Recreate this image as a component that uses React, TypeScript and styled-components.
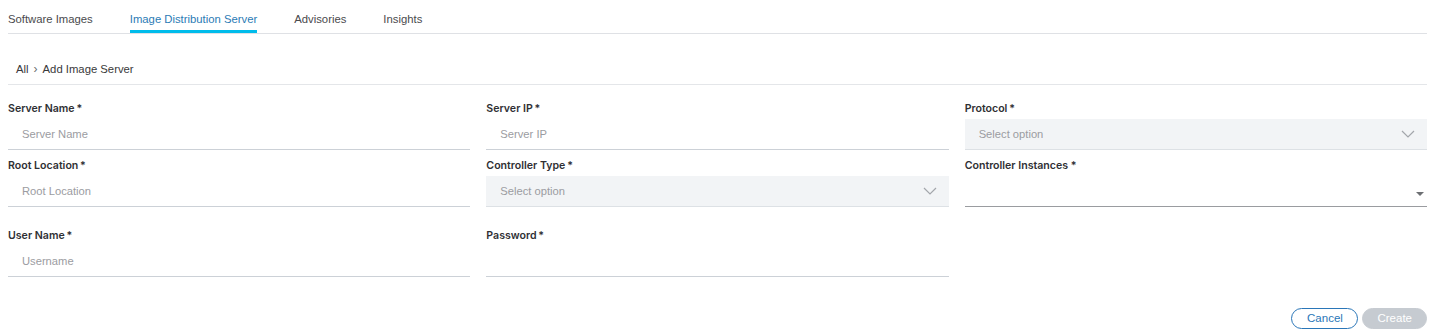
import React from "react";
import styled, { createGlobalStyle } from "styled-components";

const GlobalStyle = createGlobalStyle`
  body {
    margin: 0;
    background: #ffffff;
    font-family: "Liberation Sans", Arial, sans-serif;
  }
`;

const Page = styled.div`
  padding: 0 3px 0 8px;
  color: #39393b;
`;

const TabBar = styled.div`
  display: flex;
  gap: 37px;
  border-bottom: 1px solid #dfe1e5;
`;

const Tab = styled.div<{ $active?: boolean }>`
  box-sizing: border-box;
  height: 33px;
  padding-top: 12px;
  font-size: 11.3px;
  line-height: 14px;
  color: ${(p) => (p.$active ? "#2b7bb5" : "#4a4a4d")};
  border-bottom: 3px solid ${(p) => (p.$active ? "#00bceb" : "transparent")};
  cursor: pointer;
`;

const Breadcrumb = styled.div`
  display: flex;
  align-items: center;
  gap: 5px;
  height: 51px;
  box-sizing: border-box;
  padding: 28px 0 9px 8px;
  font-size: 11.3px;
  line-height: 14px;
  color: #39393b;
  border-bottom: 1px solid #e4e6e9;
`;

const Crumb = styled.span`
  color: #6b6b70;
  font-size: 12px;
`;

const FormGrid = styled.div`
  display: grid;
  grid-template-columns: repeat(3, 1fr);
  column-gap: 16px;
  row-gap: 7px;
  margin-top: 15px;
`;

const Field = styled.div<{ $pushed?: boolean }>`
  display: flex;
  flex-direction: column;
  margin-top: ${(p) => (p.$pushed ? "13px" : "0")};
`;

const Label = styled.label`
  font-family: Inter, "Liberation Sans", sans-serif;
  font-size: 10.6px;
  font-weight: 600;
  line-height: 14px;
  color: #2f3034;
  padding-top: 2px;
  margin-bottom: 3px;
`;

const TextBox = styled.input`
  box-sizing: content-box;
  height: 30px;
  padding: 0 14px;
  border: none;
  border-bottom: 1px solid #ccd1d7;
  background: #ffffff;
  font-family: "Liberation Sans", Arial, sans-serif;
  font-size: 11.2px;
  color: #39393b;
  outline: none;
  &::placeholder {
    color: #9b9ca1;
  }
`;

const SelectBox = styled.div`
  display: flex;
  align-items: center;
  justify-content: space-between;
  height: 30px;
  padding: 0 12px 0 14px;
  background: #f2f4f6;
  border-bottom: 1px solid #dde1e5;
  font-size: 11.2px;
  color: #9b9ca1;
`;

const MultiSelect = styled.div`
  display: flex;
  align-items: center;
  justify-content: flex-end;
  height: 30px;
  padding-right: 3px;
  border-bottom: 1px solid #9a9ca0;
`;

const Caret = styled.span`
  width: 0;
  height: 0;
  margin-top: 6px;
  border-left: 4px solid transparent;
  border-right: 4px solid transparent;
  border-top: 4px solid #6d6f73;
`;

const Footer = styled.div`
  display: flex;
  justify-content: flex-end;
  gap: 4px;
  margin-top: 31px;
`;

const Button = styled.button<{ $primary?: boolean }>`
  height: 21px;
  padding: 0 14px;
  min-width: ${(p) => (p.$primary ? "64px" : "67px")};
  border-radius: 11px;
  font-family: "Liberation Sans", Arial, sans-serif;
  font-size: 11.5px;
  line-height: 19px;
  border: 1px solid ${(p) => (p.$primary ? "#c6cbd1" : "#2a76b8")};
  background: ${(p) => (p.$primary ? "#c6cbd1" : "#ffffff")};
  color: ${(p) => (p.$primary ? "#ffffff" : "#2a76b8")};
  cursor: pointer;
`;

function Chevron() {
  return (
    <svg width="14" height="8" viewBox="0 0 14 8" fill="none">
      <polyline points="1,1 7,7 13,1" stroke="#a3a6ab" strokeWidth="1.2" />
    </svg>
  );
}

export default function App() {
  return (
    <Page>
      <GlobalStyle />
      <TabBar>
        <Tab>Software Images</Tab>
        <Tab $active>Image Distribution Server</Tab>
        <Tab>Advisories</Tab>
        <Tab>Insights</Tab>
      </TabBar>
      <Breadcrumb>
        All <Crumb>›</Crumb> Add Image Server
      </Breadcrumb>
      <FormGrid>
        <Field>
          <Label>Server Name{"\u2009"}*</Label>
          <TextBox placeholder="Server Name" />
        </Field>
        <Field>
          <Label>Server IP{"\u2009"}*</Label>
          <TextBox placeholder="Server IP" />
        </Field>
        <Field>
          <Label>Protocol{"\u2009"}*</Label>
          <SelectBox>
            Select option
            <Chevron />
          </SelectBox>
        </Field>

        <Field>
          <Label>Root Location{"\u2009"}*</Label>
          <TextBox placeholder="Root Location" />
        </Field>
        <Field>
          <Label>Controller Type{"\u2009"}*</Label>
          <SelectBox>
            Select option
            <Chevron />
          </SelectBox>
        </Field>
        <Field>
          <Label>Controller Instances *</Label>
          <MultiSelect>
            <Caret />
          </MultiSelect>
        </Field>

        <Field $pushed>
          <Label>User Name{"\u2009"}*</Label>
          <TextBox placeholder="Username" />
        </Field>
        <Field $pushed>
          <Label>Password{"\u2009"}*</Label>
          <TextBox type="password" />
        </Field>
      </FormGrid>
      <Footer>
        <Button>Cancel</Button>
        <Button $primary>Create</Button>
      </Footer>
    </Page>
  );
}
